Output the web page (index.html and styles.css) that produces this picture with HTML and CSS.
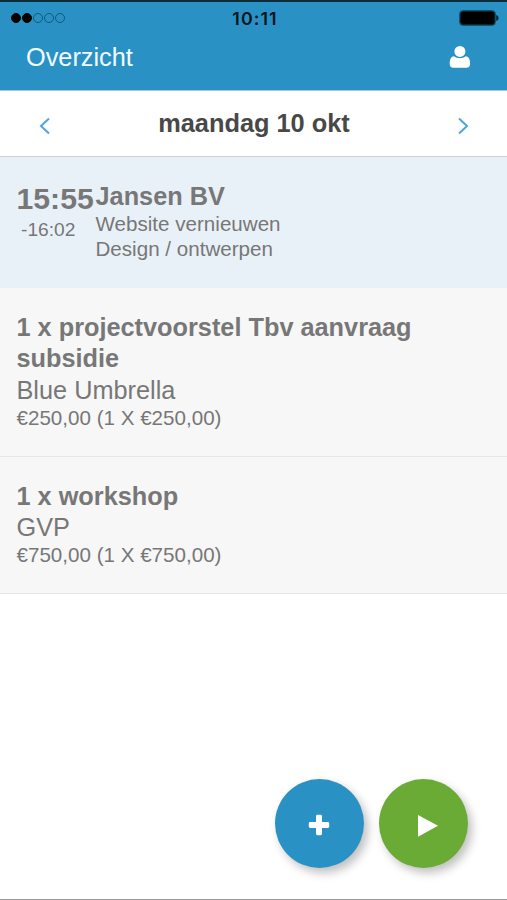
FILE: index.html
```html
<!DOCTYPE html>
<html lang="nl">

<head>
    <meta charset="UTF-8">
    <meta name="viewport" content="width=device-width, initial-scale=1.0">
    <title>Overzicht</title>
    <link rel="stylesheet" href="styles.css">
</head>

<body>
    <header>
        <div class="statusbar">
            <div class="signal">
                <i class="on"></i><i class="on"></i><i></i><i></i><i></i>
            </div>
            <div class="clock">10:11</div>
            <svg class="battery" width="40" height="16" viewBox="0 0 40 16">
                <rect x="0.8" y="0.8" width="35.4" height="14.4" rx="3.5" fill="#000" stroke="#0f4a66" stroke-width="1.2" />
                <path d="M37.2 5 Q39.6 5.6 39.6 8 Q39.6 10.4 37.2 11 Z" fill="#0b2635" />
            </svg>
        </div>
        <div class="titlebar">
            <h1>Overzicht</h1>
            <svg class="user" width="22" height="24" viewBox="0 0 22 24">
                <path d="M5 11.2 C1.8 11.6 0.7 14.5 0.7 18.8 Q0.7 22.8 4.5 22.8 H17.3 Q21.1 22.8 21.1 18.8 C21.1 14.5 20 11.6 16.8 11.2 C13.6 13.8 8.2 13.8 5 11.2 Z" fill="#fff" />
                <circle cx="10.9" cy="6.4" r="5.5" fill="#fff" />
            </svg>
        </div>
    </header>

    <nav>
        <svg width="12" height="18" viewBox="0 0 12 18">
            <path d="M10 1.5 L2 9 L10 16.5" />
        </svg>
        <h2>maandag 10 okt</h2>
        <svg width="12" height="18" viewBox="0 0 12 18">
            <path d="M2 1.5 L10 9 L2 16.5" />
        </svg>
    </nav>

    <main>
        <div class="item active">
            <div class="time">
                <div class="start">15:55</div>
                <div class="end">-16:02</div>
            </div>
            <div>
                <h3>Jansen BV</h3>
                <p class="small">Website vernieuwen</p>
                <p class="small">Design / ontwerpen</p>
            </div>
        </div>
        <div class="item">
            <div>
                <h3>1 x projectvoorstel Tbv aanvraag subsidie</h3>
                <p>Blue Umbrella</p>
                <p class="small">€250,00 (1 X €250,00)</p>
            </div>
        </div>
        <div class="item">
            <div>
                <h3>1 x workshop</h3>
                <p>GVP</p>
                <p class="small">€750,00 (1 X €750,00)</p>
            </div>
        </div>
    </main>

    <footer>
        <button type="button" class="add" aria-label="Toevoegen">
            <svg width="22" height="22" viewBox="0 0 22 22">
                <path d="M9.4 0.8 H12.6 Q14 0.8 14 2.2 V8 H19.8 Q21.2 8 21.2 9.4 V12.6 Q21.2 14 19.8 14 H14 V19.8 Q14 21.2 12.6 21.2 H9.4 Q8 21.2 8 19.8 V14 H2.2 Q0.8 14 0.8 12.6 V9.4 Q0.8 8 2.2 8 H8 V2.2 Q8 0.8 9.4 0.8 Z" fill="#fff" />
            </svg>
        </button>
        <button type="button" class="play" aria-label="Start">
            <svg width="22" height="24" viewBox="0 0 22 24">
                <path d="M1 1 L21 11.8 L1 22.8 Z" fill="#fff" />
            </svg>
        </button>
    </footer>
</body>

</html>
```
FILE: styles.css
```css
* {
    box-sizing: border-box;
}

body {
    font-family: "Liberation Sans", Arial, Helvetica, sans-serif;
    display: flex;
    flex-direction: column;
    height: 900px;
    margin: 0;
    background-color: #ffffff;
    border-bottom: 1px solid #9a9a9a;
    color: #777777;
    overflow: hidden;
}

h1,
h2,
h3,
p {
    margin: 0;
}

header {
    height: 91px;
    background-color: #2a91c5;
    border-top: 2px solid #0d2c3c;
    border-bottom: 1px solid #a5c4dc;
}

.statusbar {
    display: grid;
    grid-template-columns: 1fr auto 1fr;
    align-items: center;
    height: 32px;
    padding: 0 8px 0 11px;
}

.signal {
    display: flex;
    gap: 1px;
}

.signal i {
    width: 10px;
    height: 10px;
    border: 1px solid #14587a;
    border-radius: 50%;
}

.signal .on {
    background-color: #000000;
    border-color: #000000;
}

.clock {
    font-family: Inter, "Liberation Sans", sans-serif;
    font-size: 17.8px;
    font-weight: 600;
    letter-spacing: 1.1px;
    color: #04141c;
}

.battery {
    justify-self: end;
}

.titlebar {
    display: flex;
    justify-content: space-between;
    align-items: center;
    height: 46px;
    padding: 0 36px 0 26px;
}

h1 {
    font-size: 25.3px;
    font-weight: normal;
    color: #f2fbff;
}

nav {
    display: flex;
    justify-content: space-between;
    align-items: center;
    height: 66px;
    padding: 3px 38px 0 39px;
    border-bottom: 1px solid #cfd3d5;
}

nav svg {
    margin-top: 2px;
    fill: none;
    stroke: #4ea5dc;
    stroke-width: 2;
}

h2 {
    margin-top: -4px;
    font-size: 25.35px;
    color: #484848;
}

.item {
    display: flex;
    padding: 24px 17px 25px 16.5px;
    background-color: #f7f7f7;
    border-bottom: 1px solid #e6e6e6;
    font-size: 25.3px;
    line-height: 31.4px;
}

.active {
    height: 131px;
    padding-top: 23.5px;
    background-color: #e9f1f8;
    border-bottom: none;
}

.time {
    width: 79px;
    flex-shrink: 0;
}

.start {
    font-size: 30.2px;
    font-weight: bold;
    line-height: 36px;
}

.end {
    padding-left: 4.5px;
    font-size: 19.2px;
    line-height: 26px;
}

h3 {
    font-size: 25.3px;
}

.small {
    margin-top: -1px;
    font-size: 20.6px;
    line-height: 25.4px;
}

.small + .small {
    margin-top: 0;
}

footer {
    display: flex;
    justify-content: flex-end;
    gap: 15.5px;
    margin-top: auto;
    padding: 0 39px 31px 0;
}

button {
    display: flex;
    justify-content: center;
    align-items: center;
    width: 89px;
    height: 89px;
    padding: 0;
    border: none;
    border-radius: 50%;
    box-shadow: 4px 5px 10px rgba(0, 0, 0, 0.25);
}

.add {
    background-color: #2a91c5;
}

.add svg {
    margin: 3px 1px 0 0;
}

.play {
    background-color: #69ab35;
}

.play svg {
    margin: 4px 0 0 8px;
}
```
